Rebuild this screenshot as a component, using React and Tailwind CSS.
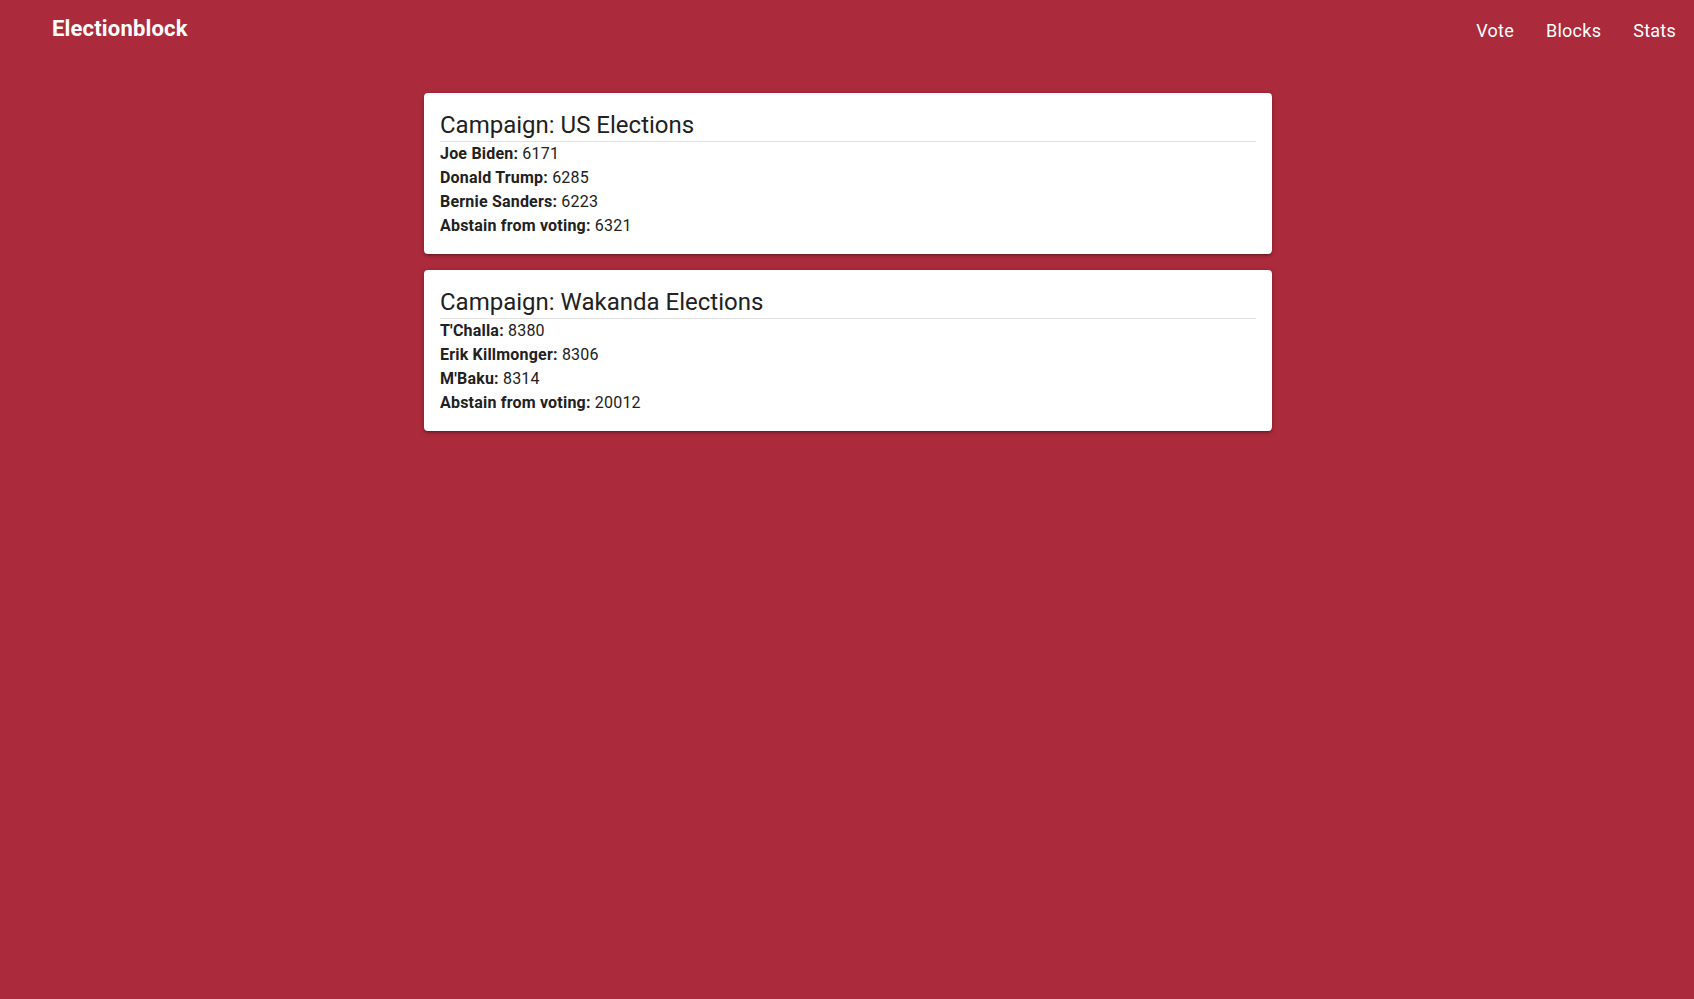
import React from "react";

const campaigns = [
  {
    name: "US Elections",
    results: [
      { label: "Joe Biden", votes: 6171 },
      { label: "Donald Trump", votes: 6285 },
      { label: "Bernie Sanders", votes: 6223 },
      { label: "Abstain from voting", votes: 6321 },
    ],
  },
  {
    name: "Wakanda Elections",
    results: [
      { label: "T'Challa", votes: 8380 },
      { label: "Erik Killmonger", votes: 8306 },
      { label: "M'Baku", votes: 8314 },
      { label: "Abstain from voting", votes: 20012 },
    ],
  },
];

export default function App() {
  return (
    <div className="min-h-screen bg-[#ab2a3c] font-['Roboto',sans-serif]">
      <nav className="h-14 flex items-center justify-between text-white">
        <a className="pl-[52px] text-[22px] font-bold tracking-[0.17px]">Electionblock</a>
        <ul className="flex pr-[2px] tracking-[0.25px]">
          <li><a className="block px-4 pt-1 text-[18px]">Vote</a></li>
          <li><a className="block px-4 pt-1 text-[18px]">Blocks</a></li>
          <li><a className="block px-4 pt-1 text-[18px]">Stats</a></li>
        </ul>
      </nav>

      <main className="pt-[37px] pl-[2px] flex flex-col items-center gap-4">
        {campaigns.map((c) => (
          <CampaignCard key={c.name} campaign={c} />
        ))}
      </main>
    </div>
  );
}

function CampaignCard({ campaign }) {
  return (
    <div className="w-[848px] bg-white rounded-[4px] p-4 text-[#212121] shadow-[0_2px_2px_0_rgba(0,0,0,0.14),0_3px_1px_-2px_rgba(0,0,0,0.12),0_1px_5px_0_rgba(0,0,0,0.2)]">
      <h2 className="text-[24px] leading-8 border-b border-[#e0e0e0]">
        Campaign: {campaign.name}
      </h2>
      {campaign.results.map((r) => (
        <p key={r.label} className="text-[16px] leading-6 tracking-[0.2px]">
          <b className="font-bold">{r.label}:</b> {r.votes}
        </p>
      ))}
    </div>
  );
}
